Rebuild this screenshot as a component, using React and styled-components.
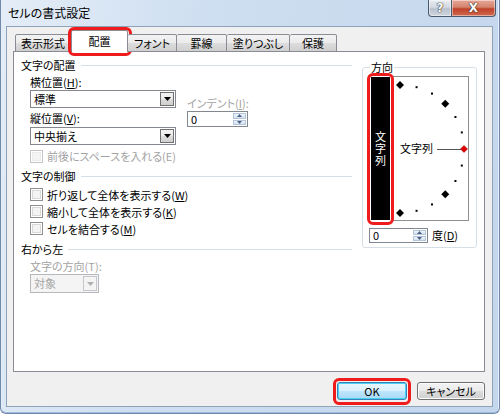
import React from 'react';
import styled, { createGlobalStyle } from 'styled-components';

const GlobalStyle = createGlobalStyle`
  html, body { margin: 0; padding: 0; background: #ffffff; }
  body {
    font-family: "Noto Sans CJK JP", "Noto Sans", sans-serif;
    font-size: 11px;
    font-feature-settings: "palt";
    color: #000;
  }
  * { box-sizing: border-box; }
`;

const Window = styled.div`
  width: 500px;
  height: 414px;
  display: flex;
  flex-direction: column;
  background: linear-gradient(100deg, #e4edf7 0%, #cfdff1 35%, #c3d6ec 100%);
  border: 1px solid #7189a8;
  border-top: none;
  border-radius: 0 0 6px 6px;
  padding: 0 6px 6px 5px;
  box-shadow: inset 0 -1px 0 #9fbbe0, inset -1px 0 0 #e6eef8, inset 1px 0 0 #e6eef8;
`;

const TitleBar = styled.div`
  height: 26px;
  display: flex;
  align-items: flex-start;
`;

const Title = styled.div`
  margin: 5px 0 0 2px;
  font-size: 12px;
  line-height: 16px;
  color: #000;
`;

const CaptionButtons = styled.div`
  margin-left: auto;
  margin-right: -3px;
  display: flex;
`;

const CaptionButton = styled.div`
  width: ${p => p.$w}px;
  height: 17px;
  display: flex;
  align-items: center;
  justify-content: center;
  border: 1px solid #4b5a6c;
  border-top: none;
  border-left: ${p => (p.$first ? '1px solid #4b5a6c' : 'none')};
  border-radius: ${p => (p.$first ? '0 0 0 4px' : '0 0 4px 0')};
  background: ${p =>
    p.$close
      ? 'linear-gradient(180deg, #e8a898 0%, #d4826c 45%, #c0412a 55%, #d0694f 100%)'
      : 'linear-gradient(180deg, #e9edf2 0%, #d3d9e1 45%, #b9c2cd 55%, #cfd6df 100%)'};
  box-shadow: inset 0 0 0 1px rgba(255, 255, 255, 0.45);
  color: #fff;
  font-family: "DejaVu Sans", sans-serif;
  font-weight: bold;
  font-size: 12px;
  line-height: 1;
  text-shadow: 0 0 1px #333, 0 0 1px #333, 0 0 1px #333;
`;

const Client = styled.div`
  flex: 1;
  display: flex;
  flex-direction: column;
  background: #f0f0f0;
  border: 1px solid #8ea2ba;
`;

const TabRow = styled.div`
  display: flex;
  align-items: flex-end;
  height: 22px;
  margin: 3px 0 -1px 8px;
  position: relative;
  z-index: 2;
`;

const Tab = styled.div`
  position: relative;
  width: ${p => p.$w}px;
  height: ${p => (p.$active ? 22 : 18)}px;
  display: flex;
  align-items: ${p => (p.$active ? 'center' : 'flex-start')};
  justify-content: center;
  padding-top: ${p => (p.$active ? 0 : 1)}px;
  line-height: 15px;
  border: 1px solid #898c95;
  border-bottom: ${p => (p.$active ? 'none' : '1px solid #898c95')};
  border-left: ${p => (p.$first || p.$active ? '1px solid #898c95' : 'none')};
  border-radius: 2px 2px 0 0;
  background: ${p =>
    p.$active ? '#ffffff' : 'linear-gradient(180deg, #f3f3f3 0%, #ebebeb 50%, #dddddd 51%, #cfcfcf 100%)'};
  ${p => p.$active && `
    &::after {
      content: '';
      position: absolute;
      top: -4px; left: -4px; right: -5px; bottom: -4px;
      border: 3px solid #ee1c1c;
      border-radius: 6px;
    }
  `}
`;

const Panel = styled.div`
  height: 321px;
  margin: 0 7px 0 6px;
  background: #ffffff;
  border: 1px solid #898c95;
  display: grid;
  grid-template-columns: 331px 115px;
  column-gap: 10px;
  align-items: start;
  padding-left: 7px;
`;

const LeftCol = styled.div`
  display: flex;
  flex-direction: column;
`;

const SectionHeader = styled.div`
  display: flex;
  align-items: center;
  gap: 5px;
  height: 16px;
  line-height: 16px;
  margin-top: ${p => p.$mt}px;
  color: #000;
  &::after {
    content: '';
    flex: 1;
    height: 1px;
    background: #d5dfe5;
  }
`;

const AlignGrid = styled.div`
  display: grid;
  grid-template-columns: 146px 61px;
  column-gap: 11px;
  padding-left: 9px;
  margin-top: 1px;
  align-items: start;
`;

const Stack = styled.div`
  display: flex;
  flex-direction: column;
  margin-top: ${p => p.$mt || 0}px;
`;

const Label = styled.div`
  height: 16px;
  line-height: 16px;
  margin-top: ${p => p.$mt || 0}px;
  padding-left: ${p => p.$pl || 0}px;
  color: ${p => (p.$disabled ? '#a3a3a3' : '#000')};
  white-space: nowrap;
`;

const SelectBox = styled.div`
  width: ${p => p.$w}px;
  height: ${p => p.$h}px;
  margin-top: ${p => p.$mt || 0}px;
  margin-left: ${p => p.$ml || 0}px;
  display: flex;
  border: 1px solid ${p => (p.$disabled ? '#b5b8bc' : '#828790')};
  background: ${p => (p.$disabled ? '#f4f4f4' : '#ffffff')};
  padding: 1px;
`;

const SelectText = styled.div`
  flex: 1;
  padding-left: 2px;
  line-height: ${p => p.$h - 4}px;
  color: ${p => (p.$disabled ? '#a3a3a3' : '#000')};
`;

const DropButton = styled.div`
  width: 14px;
  display: flex;
  align-items: center;
  justify-content: center;
  border: 1px solid ${p => (p.$disabled ? '#c5c7ca' : '#707070')};
  background: ${p =>
    p.$disabled ? '#f4f4f4' : 'linear-gradient(180deg, #f2f2f2 0%, #ebebeb 50%, #dddddd 51%, #cfcfcf 100%)'};
`;

const SpinBox = styled.div`
  width: ${p => p.$w}px;
  height: ${p => p.$h}px;
  margin-left: ${p => p.$ml || 0}px;
  display: flex;
  border: 1px solid #828790;
  background: #ffffff;
  padding: 1px;
`;

const SpinText = styled.div`
  flex: 1;
  padding-left: 2px;
  line-height: ${p => p.$h - 4}px;
`;

const SpinButtons = styled.div`
  width: 13px;
  display: flex;
  flex-direction: column;
  gap: 1px;
`;

const SpinHalf = styled.div`
  flex: 1;
  display: flex;
  align-items: center;
  justify-content: center;
  border: 1px solid #b4c6dc;
  background: linear-gradient(180deg, #eef4fb 0%, #d3e1f1 100%);
`;

const CheckRow = styled.div`
  display: flex;
  align-items: center;
  gap: 4px;
  height: ${p => p.$h || 17}px;
  margin-top: ${p => p.$mt || 0}px;
  padding-left: 9px;
  line-height: 16px;
  color: ${p => (p.$disabled ? '#a3a3a3' : '#000')};
`;

const CheckText = styled.span`
  white-space: nowrap;
`;

const CheckBox = styled.span`
  width: 13px;
  height: 13px;
  border: 1px solid ${p => (p.$disabled ? '#c4c4c4' : '#8f8f8f')};
  background: #f4f4f4;
  box-shadow: inset 0 0 0 1px #ffffff, inset 0 0 0 2px ${p => (p.$disabled ? '#ececec' : '#d9d9d9')};
  flex: none;
`;

const GroupBox = styled.fieldset`
  margin: 7px 0 0 0;
  padding: 0 0 4px 7px;
  border: 1px solid #d5dfe5;
  border-radius: 3px;
  min-width: 0;
`;

const Legend = styled.legend`
  padding: 0 1px;
  line-height: 16px;
  height: 16px;
`;

const OrientBox = styled.div`
  display: flex;
  width: 99px;
  height: 145px;
  margin-top: 1px;
`;

const VerticalStrip = styled.div`
  position: relative;
  width: 21px;
  background: #000;
  border: 1px solid #ffffff;
  display: flex;
  align-items: center;
  justify-content: center;
  color: #fff;
  writing-mode: vertical-rl;
  text-orientation: upright;
  font-size: 11px;
  letter-spacing: 1px;
  &::after {
    content: '';
    position: absolute;
    top: -4px; left: -4px; right: -4px; bottom: -5px;
    border: 3px solid #ee1c1c;
    border-radius: 6px;
  }
`;

const Dial = styled.div`
  flex: 1;
  border: 1px solid #8e8f8f;
  border-left: none;
  background: #ffffff;
  display: flex;
`;

const DegreeRow = styled.div`
  display: flex;
  align-items: center;
  gap: 4px;
  margin-top: 6px;
  line-height: 16px;
`;

const ButtonRow = styled.div`
  display: flex;
  justify-content: flex-end;
  gap: 10px;
  margin: 10px 7px 0 0;
`;

const PushButton = styled.div`
  position: relative;
  width: ${p => p.$w}px;
  height: 18px;
  display: flex;
  align-items: center;
  justify-content: center;
  border: 1px solid ${p => (p.$default ? '#3c7fb1' : '#707070')};
  border-radius: 3px;
  background: ${p =>
    p.$default
      ? 'linear-gradient(180deg, #eaf6fd 0%, #d9f0fc 50%, #bee6fd 51%, #a7d9f5 100%)'
      : 'linear-gradient(180deg, #f2f2f2 0%, #ebebeb 50%, #dddddd 51%, #cfcfcf 100%)'};
  box-shadow: inset 0 0 0 1px ${p => (p.$default ? '#48d2fa' : '#fcfcfc')};
  line-height: 16px;
  ${p => p.$highlight && `
    &::after {
      content: '';
      position: absolute;
      top: -5px; left: -5px; right: -5px; bottom: -6px;
      border: 3px solid #ee1c1c;
      border-radius: 6px;
    }
  `}
`;

const Arrow = ({ color = '#000', up }) => (
  <svg width="7" height="4" viewBox="0 0 7 4">
    <path d={up ? 'M0 4h7L3.5 0z' : 'M0 0h7L3.5 4z'} fill={color} />
  </svg>
);

const SmallArrow = ({ up }) => (
  <svg width="5" height="3" viewBox="0 0 5 3">
    <path d={up ? 'M0 3h5L2.5 0z' : 'M0 0h5L2.5 3z'} fill="#4d6185" />
  </svg>
);

const Select = ({ value, w, h, mt, ml, disabled }) => (
  <SelectBox $w={w} $h={h} $mt={mt} $ml={ml} $disabled={disabled}>
    <SelectText $h={h} $disabled={disabled}>{value}</SelectText>
    <DropButton $disabled={disabled}>
      <Arrow color={disabled ? '#b0b0b0' : '#000'} />
    </DropButton>
  </SelectBox>
);

const Spinner = ({ value, w, h, ml }) => (
  <SpinBox $w={w} $h={h} $ml={ml}>
    <SpinText $h={h}>{value}</SpinText>
    <SpinButtons>
      <SpinHalf><SmallArrow up /></SpinHalf>
      <SpinHalf><SmallArrow /></SpinHalf>
    </SpinButtons>
  </SpinBox>
);

const Mn = ({ children }) => <u>{children}</u>;

const DialDrawing = () => {
  const cx = 9;
  const cy = 72;
  const r = 64;
  const marks = [];
  for (let a = 90; a >= -90; a -= 15) {
    const rad = (a * Math.PI) / 180;
    const x = cx + r * Math.cos(rad);
    const y = cy - r * Math.sin(rad);
    if (a === 0) continue;
    if (a % 45 === 0) {
      marks.push(
        <path key={a} d={`M${x} ${y - 4}L${x + 4} ${y}L${x} ${y + 4}L${x - 4} ${y}z`} fill="#000" />
      );
    } else {
      marks.push(<rect key={a} x={x - 1} y={y - 1} width="2" height="2" fill="#000" />);
    }
  }
  return (
    <svg width="77" height="143" viewBox="0 0 77 143">
      {marks}
      <text x="9" y="76" fontSize="11" fontFamily='"Noto Sans CJK JP", sans-serif' fill="#000">文字列</text>
      <line x1="46" y1="72.5" x2="70" y2="72.5" stroke="#555" strokeWidth="1" />
      <path d="M73 68.5L76.5 72L73 75.5L69.5 72z" fill="#e00000" stroke="#800" strokeWidth="0.5" />
    </svg>
  );
};

export default function App() {
  return (
    <>
      <GlobalStyle />
      <Window>
        <TitleBar>
          <Title>セルの書式設定</Title>
          <CaptionButtons>
            <CaptionButton $w={24} $first>?</CaptionButton>
            <CaptionButton $w={44} $close>X</CaptionButton>
          </CaptionButtons>
        </TitleBar>
        <Client>
          <TabRow>
            <Tab $w={56} $first>表示形式</Tab>
            <Tab $w={57} $active>配置</Tab>
            <Tab $w={49}>フォント</Tab>
            <Tab $w={50}>罫線</Tab>
            <Tab $w={63}>塗りつぶし</Tab>
            <Tab $w={47}>保護</Tab>
          </TabRow>
          <Panel>
            <LeftCol>
              <SectionHeader $mt={5}>文字の配置</SectionHeader>
              <AlignGrid>
                <Stack>
                  <Label>横位置(<Mn>H</Mn>):</Label>
                  <Select value="標準" w={146} h={18} />
                  <Label $mt={2}>縦位置(<Mn>V</Mn>):</Label>
                  <Select value="中央揃え" w={146} h={18} mt={1} />
                </Stack>
                <Stack $mt={21}>
                  <Label $disabled>インデント(<Mn>I</Mn>):</Label>
                  <Spinner value="0" w={61} h={16} />
                </Stack>
              </AlignGrid>
              <CheckRow $mt={3} $h={16} $disabled>
                <CheckBox $disabled />
                <CheckText>前後にスペースを入れる(E)</CheckText>
              </CheckRow>
              <SectionHeader $mt={4}>文字の制御</SectionHeader>
              <CheckRow $mt={2}>
                <CheckBox />
                <CheckText>折り返して全体を表示する(<Mn>W</Mn>)</CheckText>
              </CheckRow>
              <CheckRow>
                <CheckBox />
                <CheckText>縮小して全体を表示する(<Mn>K</Mn>)</CheckText>
              </CheckRow>
              <CheckRow>
                <CheckBox />
                <CheckText>セルを結合する(<Mn>M</Mn>)</CheckText>
              </CheckRow>
              <SectionHeader $mt={4}>右から左</SectionHeader>
              <Label $mt={1} $pl={9} $disabled>文字の方向(T):</Label>
              <Select value="対象" w={69} h={19} ml={9} disabled />
            </LeftCol>
            <GroupBox>
              <Legend>方向</Legend>
              <OrientBox>
                <VerticalStrip>文字列</VerticalStrip>
                <Dial>
                  <DialDrawing />
                </Dial>
              </OrientBox>
              <DegreeRow>
                <Spinner value="0" w={59} h={15} ml={-1} />
                <span>度(<Mn>D</Mn>)</span>
              </DegreeRow>
            </GroupBox>
          </Panel>
          <ButtonRow>
            <PushButton $w={70} $default $highlight>OK</PushButton>
            <PushButton $w={68}>キャンセル</PushButton>
          </ButtonRow>
        </Client>
      </Window>
    </>
  );
}
